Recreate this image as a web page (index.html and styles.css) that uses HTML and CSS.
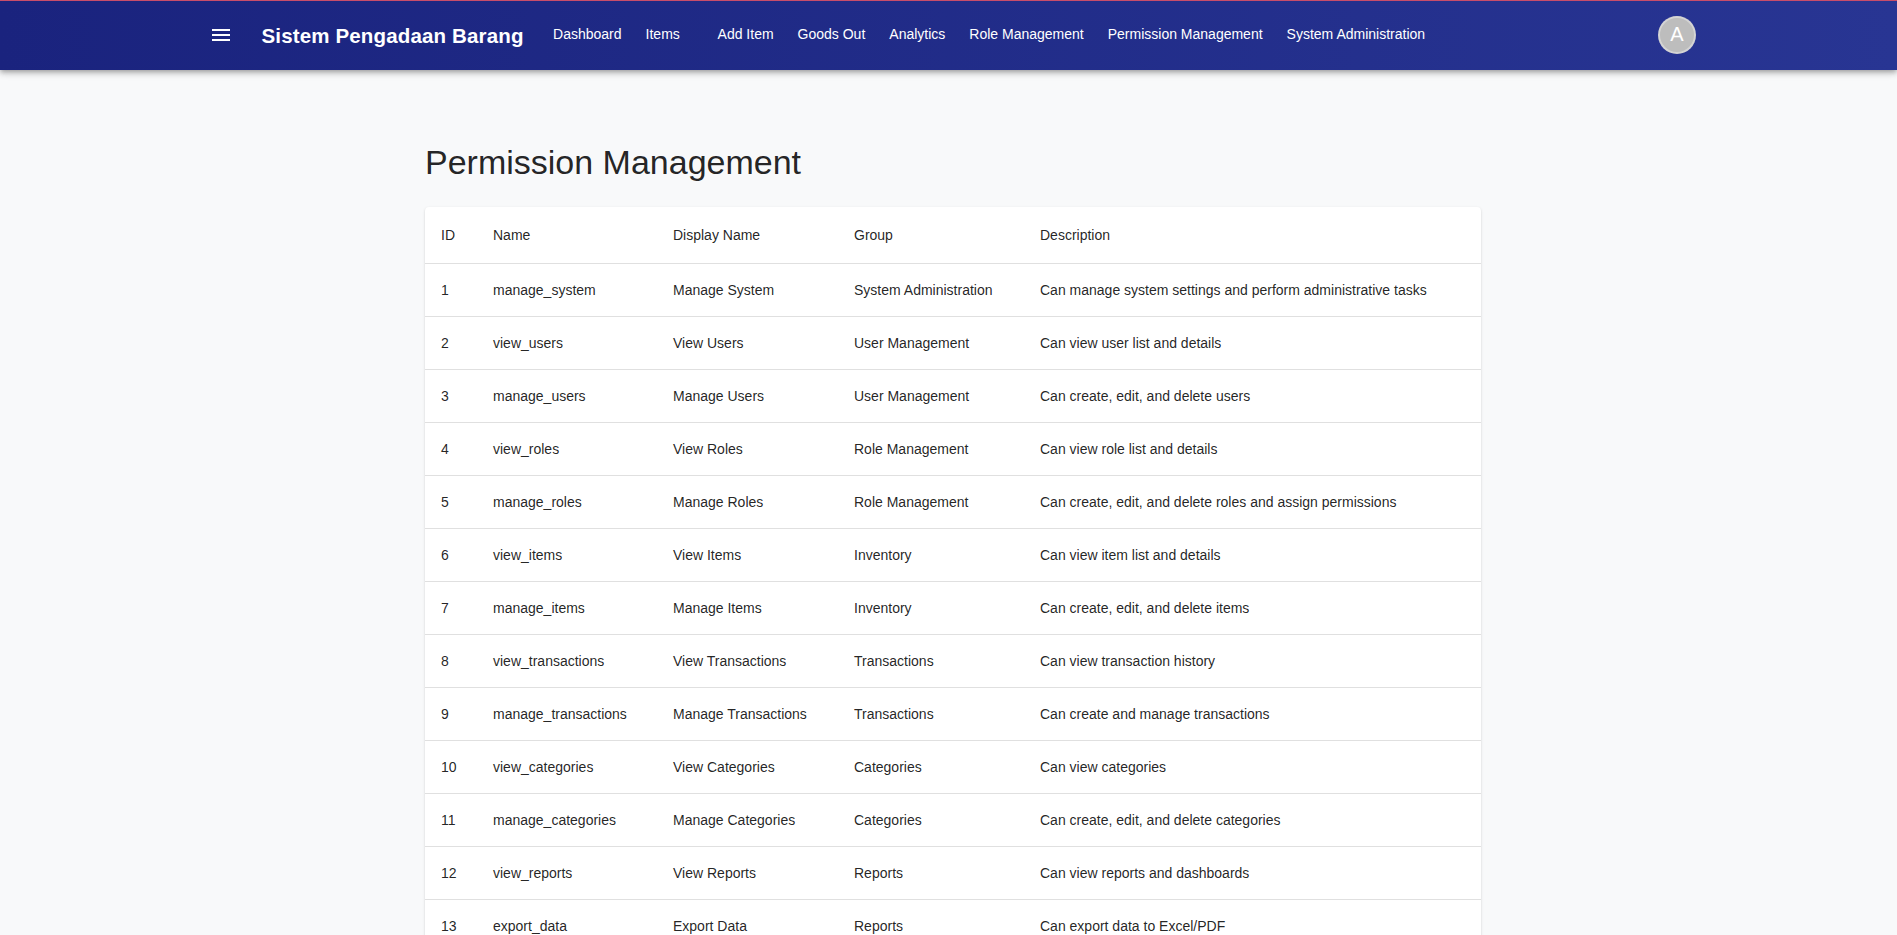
FILE: index.html
```html
<!DOCTYPE html>
<html lang="en">
<head>
<meta charset="utf-8">
<title>Permission Management</title>
<link rel="stylesheet" href="styles.css">
</head>
<body>
<header class="appbar">
  <div class="appbar-inner">
    <button class="menu-btn" aria-label="menu">
      <svg viewBox="0 0 24 24" width="24" height="24"><path fill="#fff" d="M3 18h18v-2H3v2zm0-5h18v-2H3v2zm0-7v2h18V6H3z"/></svg>
    </button>
    <div class="brand">Sistem Pengadaan Barang</div>
    <nav class="nav">
      <a class="nav-link">Dashboard</a>
      <a class="nav-link">Items</a>
      <a class="nav-link">Add Item</a>
      <a class="nav-link">Goods Out</a>
      <a class="nav-link">Analytics</a>
      <a class="nav-link">Role Management</a>
      <a class="nav-link">Permission Management</a>
      <a class="nav-link">System Administration</a>
    </nav>
    <div class="spacer"></div>
    <div class="avatar">A</div>
  </div>
</header>
<main class="main">
  <h1 class="page-title">Permission Management</h1>
  <div class="card">
    <table class="table">
      <colgroup>
        <col class="c-id"><col class="c-name"><col class="c-disp"><col class="c-group"><col class="c-desc">
      </colgroup>
      <thead>
        <tr><th>ID</th><th>Name</th><th>Display Name</th><th>Group</th><th>Description</th></tr>
      </thead>
      <tbody>
        <tr><td>1</td><td>manage_system</td><td>Manage System</td><td>System Administration</td><td>Can manage system settings and perform administrative tasks</td></tr>
        <tr><td>2</td><td>view_users</td><td>View Users</td><td>User Management</td><td>Can view user list and details</td></tr>
        <tr><td>3</td><td>manage_users</td><td>Manage Users</td><td>User Management</td><td>Can create, edit, and delete users</td></tr>
        <tr><td>4</td><td>view_roles</td><td>View Roles</td><td>Role Management</td><td>Can view role list and details</td></tr>
        <tr><td>5</td><td>manage_roles</td><td>Manage Roles</td><td>Role Management</td><td>Can create, edit, and delete roles and assign permissions</td></tr>
        <tr><td>6</td><td>view_items</td><td>View Items</td><td>Inventory</td><td>Can view item list and details</td></tr>
        <tr><td>7</td><td>manage_items</td><td>Manage Items</td><td>Inventory</td><td>Can create, edit, and delete items</td></tr>
        <tr><td>8</td><td>view_transactions</td><td>View Transactions</td><td>Transactions</td><td>Can view transaction history</td></tr>
        <tr><td>9</td><td>manage_transactions</td><td>Manage Transactions</td><td>Transactions</td><td>Can create and manage transactions</td></tr>
        <tr><td>10</td><td>view_categories</td><td>View Categories</td><td>Categories</td><td>Can view categories</td></tr>
        <tr><td>11</td><td>manage_categories</td><td>Manage Categories</td><td>Categories</td><td>Can create, edit, and delete categories</td></tr>
        <tr><td>12</td><td>view_reports</td><td>View Reports</td><td>Reports</td><td>Can view reports and dashboards</td></tr>
        <tr><td>13</td><td>export_data</td><td>Export Data</td><td>Reports</td><td>Can export data to Excel/PDF</td></tr>
      </tbody>
    </table>
  </div>
</main>
</body>
</html>
```

FILE: styles.css
```css
* { box-sizing: border-box; }

html, body {
  margin: 0;
  padding: 0;
}

body {
  background: #f8f9fa;
  font-family: "Liberation Sans", Arial, Helvetica, sans-serif;
  color: rgba(0, 0, 0, 0.87);
}

.appbar {
  height: 70px;
  border-top: 1px solid #c94d6a;
  background: linear-gradient(90deg, #1a237e 0%, #283593 100%);
  box-shadow: 0 2px 4px -1px rgba(0,0,0,0.2), 0 4px 5px 0 rgba(0,0,0,0.14), 0 1px 10px 0 rgba(0,0,0,0.12);
  position: relative;
  z-index: 2;
}

.appbar-inner {
  max-width: 1495px;
  height: 100%;
  margin: 0 auto;
  display: flex;
  align-items: center;
  margin-top: -1px;
}

.menu-btn {
  width: 40px;
  height: 40px;
  padding: 8px;
  border: 0;
  background: transparent;
  display: flex;
  align-items: center;
  justify-content: center;
  flex: none;
}

.menu-btn svg { display: block; }

.brand {
  margin-left: 20.5px;
  margin-right: 21.5px;
  padding-top: 3px;
  color: #fff;
  font-weight: 700;
  font-size: 20.5px;
  letter-spacing: 0.15px;
  line-height: 1.6;
  white-space: nowrap;
}

.nav {
  display: flex;
  gap: 8px;
}

.nav-link {
  min-width: 64px;
  padding: 6px 8px;
  color: #fff;
  font-size: 14px;
  line-height: 1.75;
  white-space: nowrap;
  text-align: left;
}

.spacer { flex: 1; }

.avatar {
  width: 38px;
  height: 38px;
  border-radius: 50%;
  background: #bdbdbd;
  border: 2px solid rgba(255,255,255,0.35);
  color: #fff;
  font-size: 20px;
  display: flex;
  align-items: center;
  justify-content: center;
  flex: none;
}

.main {
  max-width: 1065px;
  margin: 0 auto;
  padding: 71px 0 40px 9px;
}

.page-title {
  margin: 0 0 24px;
  font-size: 34px;
  font-weight: 400;
  line-height: 42px;
  letter-spacing: 0;
  color: rgba(0, 0, 0, 0.87);
}

.card {
  background: #fff;
  border-radius: 4px;
  box-shadow: 0 2px 1px -1px rgba(0,0,0,0.2), 0 1px 1px 0 rgba(0,0,0,0.14), 0 1px 3px 0 rgba(0,0,0,0.12);
  overflow: hidden;
}

.table {
  width: 100%;
  border-collapse: collapse;
  table-layout: fixed;
  font-size: 14px;
}

.c-id { width: 52px; }
.c-name { width: 180px; }
.c-disp { width: 181px; }
.c-group { width: 186px; }

.table th,
.table td {
  text-align: left;
  padding: 16px;
  border-bottom: 1px solid #e0e0e0;
  color: rgba(0, 0, 0, 0.87);
  white-space: nowrap;
}

.table th {
  font-weight: 400;
  line-height: 24px;
}

.table td {
  line-height: 20.02px;
}
```
